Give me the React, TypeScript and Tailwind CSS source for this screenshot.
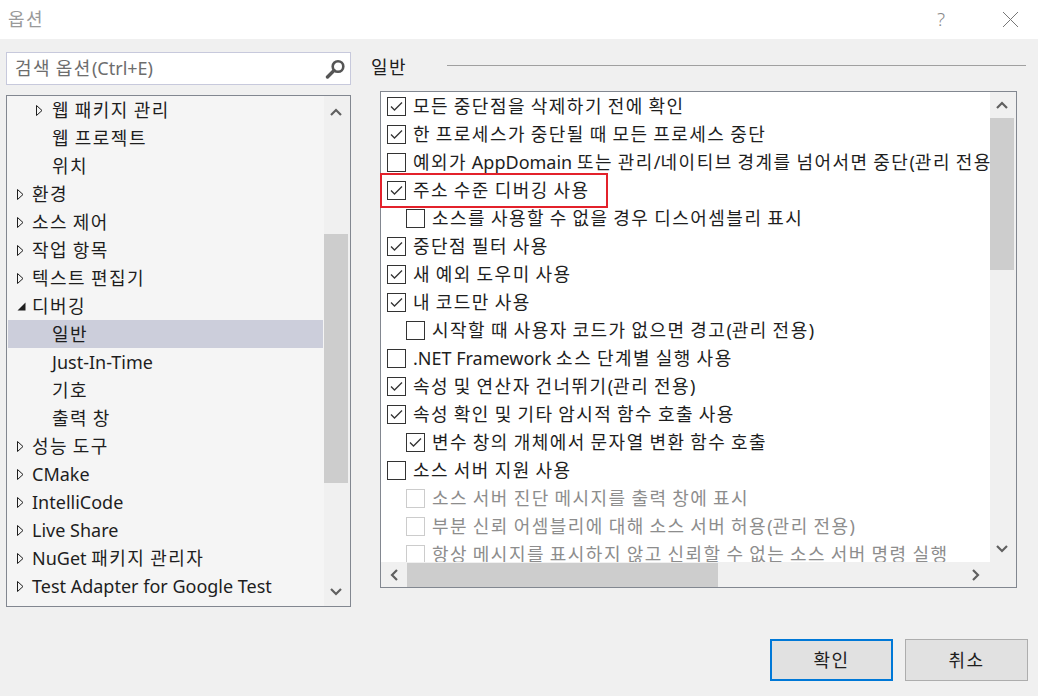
import React from "react";

const font = { fontFamily: '"Noto Sans", "Noto Sans CJK KR", sans-serif' };

// hangul in Noto CJK runs a bit narrower than the reference's Malgun Gothic, so pad it
const Txt = ({ s }: { s: string }) => (
  <>
    {s.split(/([\uAC00-\uD7A3]+)/).map((p, i) =>
      /[\uAC00-\uD7A3]/.test(p) ? (
        <span key={i} className="tracking-[1.5px]">
          {p}
        </span>
      ) : (
        <React.Fragment key={i}>{p}</React.Fragment>
      )
    )}
  </>
);

type TreeItem = { text: string; level: 0 | 1; arrow?: "closed" | "open"; selected?: boolean };

const treeItems: TreeItem[] = [
  { text: "웹 패키지 관리", level: 1, arrow: "closed" },
  { text: "웹 프로젝트", level: 1 },
  { text: "위치", level: 1 },
  { text: "환경", level: 0, arrow: "closed" },
  { text: "소스 제어", level: 0, arrow: "closed" },
  { text: "작업 항목", level: 0, arrow: "closed" },
  { text: "텍스트 편집기", level: 0, arrow: "closed" },
  { text: "디버깅", level: 0, arrow: "open" },
  { text: "일반", level: 1, selected: true },
  { text: "Just-In-Time", level: 1 },
  { text: "기호", level: 1 },
  { text: "출력 창", level: 1 },
  { text: "성능 도구", level: 0, arrow: "closed" },
  { text: "CMake", level: 0, arrow: "closed" },
  { text: "IntelliCode", level: 0, arrow: "closed" },
  { text: "Live Share", level: 0, arrow: "closed" },
  { text: "NuGet 패키지 관리자", level: 0, arrow: "closed" },
  { text: "Test Adapter for Google Test", level: 0, arrow: "closed" },
];

type Opt = { text: string; level: 0 | 1; checked?: boolean; disabled?: boolean };

const options: Opt[] = [
  { text: "모든 중단점을 삭제하기 전에 확인", level: 0, checked: true },
  { text: "한 프로세스가 중단될 때 모든 프로세스 중단", level: 0, checked: true },
  { text: "예외가 AppDomain 또는 관리/네이티브 경계를 넘어서면 중단(관리 전용)", level: 0 },
  { text: "주소 수준 디버깅 사용", level: 0, checked: true },
  { text: "소스를 사용할 수 없을 경우 디스어셈블리 표시", level: 1 },
  { text: "중단점 필터 사용", level: 0, checked: true },
  { text: "새 예외 도우미 사용", level: 0, checked: true },
  { text: "내 코드만 사용", level: 0, checked: true },
  { text: "시작할 때 사용자 코드가 없으면 경고(관리 전용)", level: 1 },
  { text: ".NET Framework 소스 단계별 실행 사용", level: 0 },
  { text: "속성 및 연산자 건너뛰기(관리 전용)", level: 0, checked: true },
  { text: "속성 확인 및 기타 암시적 함수 호출 사용", level: 0, checked: true },
  { text: "변수 창의 개체에서 문자열 변환 함수 호출", level: 1, checked: true },
  { text: "소스 서버 지원 사용", level: 0 },
  { text: "소스 서버 진단 메시지를 출력 창에 표시", level: 1, disabled: true },
  { text: "부분 신뢰 어셈블리에 대해 소스 서버 허용(관리 전용)", level: 1, disabled: true },
  { text: "항상 메시지를 표시하지 않고 신뢰할 수 없는 소스 서버 명령 실행", level: 1, disabled: true },
];

const Chevron = ({ dir }: { dir: "up" | "down" | "left" | "right" }) => {
  const pts = {
    up: "1,7 6,2 11,7",
    down: "1,2 6,7 11,2",
    left: "7,1 2,6 7,11",
    right: "2,1 7,6 2,11",
  }[dir];
  const w = dir === "up" || dir === "down" ? 12 : 9;
  const h = dir === "up" || dir === "down" ? 9 : 12;
  return (
    <svg width={w} height={h} viewBox={`0 0 ${w} ${h}`}>
      <polyline points={pts} fill="none" stroke="#606060" strokeWidth="2.2" />
    </svg>
  );
};

const Arrow = ({ kind }: { kind: "closed" | "open" }) =>
  kind === "closed" ? (
    <svg width="7" height="11" viewBox="0 0 7 11">
      <polygon points="0.5,0.5 6,5.5 0.5,10.5" fill="none" stroke="#1e1e1e" strokeWidth="1" />
    </svg>
  ) : (
    <svg width="9" height="9" viewBox="0 0 9 9">
      <polygon points="8.5,0.5 8.5,8.5 0.5,8.5" fill="#1e1e1e" />
    </svg>
  );

const Checkbox = ({ checked, disabled }: { checked?: boolean; disabled?: boolean }) => (
  <div
    className={`w-[19px] h-[19px] shrink-0 border bg-white flex items-center justify-center ${
      disabled ? "border-[#cccccc]" : "border-[#333333]"
    }`}
  >
    {checked && (
      <svg width="17" height="17" viewBox="0 0 17 17">
        <polyline points="3,8.5 6.5,12 14,4.5" fill="none" stroke="#333333" strokeWidth="1.3" />
      </svg>
    )}
  </div>
);

export default function App() {
  return (
    <div className="w-[1038px] h-[696px] flex flex-col bg-[#f0f0f0] overflow-hidden text-[#1e1e1e]" style={font}>
      {/* title bar */}
      <div className="h-[39px] bg-white flex items-center shrink-0">
        <span className="ml-[8px] text-[18px] text-[#9a9a9a]">
          <Txt s="옵션" />
        </span>
        <span className="ml-auto text-[19px] text-[#8a8a8a] font-light mr-[57px]">?</span>
        <svg width="17" height="17" viewBox="0 0 17 17" className="mr-[19px]">
          <line x1="1" y1="1" x2="16" y2="16" stroke="#777" strokeWidth="1" />
          <line x1="16" y1="1" x2="1" y2="16" stroke="#777" strokeWidth="1" />
        </svg>
      </div>

      {/* body */}
      <div className="flex pt-[13px] shrink-0">
        {/* left column */}
        <div className="ml-[6px] w-[345px] flex flex-col">
          <div className="h-[33px] border border-[#c7c9dc] bg-white flex items-center pl-[8px]">
            <span className="text-[18px] text-[#6d6d6d]">
              <Txt s="검색 옵션(Ctrl+E)" />
            </span>
            <svg width="21" height="20" viewBox="0 0 21 20" className="ml-auto mr-[4px]">
              <circle cx="13" cy="7.5" r="5.3" fill="none" stroke="#555" strokeWidth="2.6" />
              <line x1="9" y1="11.5" x2="2.5" y2="18" stroke="#555" strokeWidth="3.4" strokeLinecap="round" />
            </svg>
          </div>
          <div className="mt-[10px] h-[512px] border border-[#828790] bg-[#f5f5f5] flex overflow-hidden">
            <div className="flex-1 flex flex-col">
              {treeItems.map((it, i) => (
                <div
                  key={i}
                  className={`h-[28px] shrink-0 flex items-center mx-[1px] whitespace-nowrap ${
                    it.selected ? "bg-[#cccedb]" : ""
                  } ${it.level === 0 ? "pl-[9px]" : "pl-[28px]"}`}
                >
                  <div className={`${it.level === 0 ? "w-[15px]" : "w-[16px]"} shrink-0 flex items-center`}>
                    {it.arrow && <Arrow kind={it.arrow} />}
                  </div>
                  <span className="text-[18px] leading-none">
                    <Txt s={it.text} />
                  </span>
                </div>
              ))}
            </div>
            <div className="w-[26px] shrink-0 bg-[#f0f0f0] flex flex-col">
              <div className="h-[32px] flex items-center justify-center pr-[2px]">
                <Chevron dir="up" />
              </div>
              <div className="mt-[106px] h-[249px] w-[24px] bg-[#cdcdcd]" />
              <div className="mt-auto h-[30px] flex items-center justify-center pr-[2px]">
                <Chevron dir="down" />
              </div>
            </div>
          </div>
        </div>

        {/* right column */}
        <div className="ml-[20px] flex flex-col">
          <div className="h-[29px] flex items-center">
            <span className="text-[18px] leading-none">
              <Txt s="일반" />
            </span>
            <div className="ml-[40px] w-[579px] h-px bg-[#a0a0a0] -mt-[3px]" />
          </div>
          <div className="ml-[9px] mt-[10px] w-[637px] h-[497px] border border-[#828790] bg-white relative grid grid-cols-[609px_26px] grid-rows-[470px_25px]">
            <div className="overflow-hidden flex flex-col">
              {options.map((o, i) => (
                <div
                  key={i}
                  className={`h-[28px] shrink-0 flex items-center whitespace-nowrap ${
                    o.level === 0 ? "pl-[6px]" : "pl-[25px]"
                  }`}
                >
                  <Checkbox checked={o.checked} disabled={o.disabled} />
                  <span className={`ml-[7px] text-[18px] leading-none ${o.disabled ? "text-[#8d8d8d]" : ""}`}>
                    <Txt s={o.text} />
                  </span>
                </div>
              ))}
            </div>
            <div className="bg-[#f0f0f0] flex flex-col">
              <div className="h-[26px] flex items-center justify-center pr-[2px]">
                <Chevron dir="up" />
              </div>
              <div className="h-[152px] w-[24px] bg-[#cdcdcd]" />
              <div className="mt-auto h-[28px] flex items-center justify-center pr-[2px]">
                <Chevron dir="down" />
              </div>
            </div>
            <div className="bg-[#f0f0f0] flex items-center">
              <div className="w-[26px] flex justify-center">
                <Chevron dir="left" />
              </div>
              <div className="h-[24px] w-[311px] bg-[#cdcdcd]" />
              <div className="ml-auto w-[30px] flex justify-center">
                <Chevron dir="right" />
              </div>
            </div>
            <div className="bg-[#f0f0f0]" />
            <div className="absolute left-[-1px] top-[81px] w-[228px] h-[35px] border-2 border-[#e3212b]" />
          </div>
        </div>
      </div>

      {/* buttons */}
      <div className="mt-[32px] flex justify-end pr-[10px] gap-[12px]">
        <button className="w-[123px] h-[42px] border-2 border-[#0078d7] bg-[#e1e1e1] text-[18px]">
          <Txt s="확인" />
        </button>
        <button className="w-[123px] h-[42px] border border-[#adadad] bg-[#e1e1e1] text-[18px]">
          <Txt s="취소" />
        </button>
      </div>
    </div>
  );
}
